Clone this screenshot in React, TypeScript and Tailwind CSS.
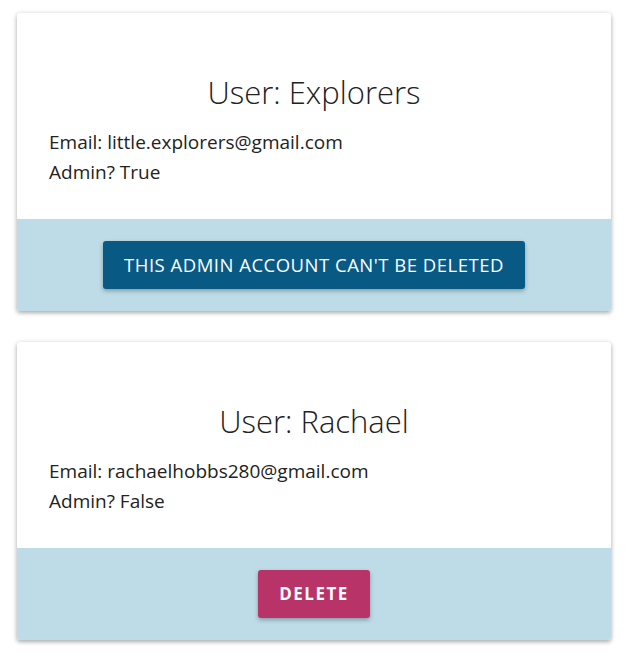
const users = [
  { name: 'Explorers', email: 'little.explorers@gmail.com', admin: true },
  { name: 'Rachael', email: 'rachaelhobbs280@gmail.com', admin: false },
]

export default function App() {
  return (
    <div className="min-h-screen bg-white pt-[13px] pl-[17px] font-['Open_Sans',sans-serif] text-[#222]">
      <div className="flex w-[594px] flex-col gap-[31px]">
        {users.map(u => (
          <div key={u.name} className="overflow-hidden rounded-[3px] bg-white shadow-[0_2px_4px_rgba(0,0,0,0.3),0_0_6px_rgba(0,0,0,0.08)]">
            <div className="h-[206px] px-8 pt-[59px]">
              <h2 className="text-center text-[31px] font-light leading-[40px]">User: {u.name}</h2>
              <p className="mt-[15px] text-[19px] leading-[30px]">Email: {u.email}</p>
              <p className="text-[19px] leading-[30px]">Admin? {u.admin ? 'True' : 'False'}</p>
            </div>
            <div className="flex h-[92px] items-center justify-center bg-[#bddce8]">
              {u.admin ? (
                <button className="h-12 rounded-[3px] bg-[#085a85] px-[21px] text-[18.5px] uppercase tracking-[0.5px] text-white shadow-[0_2px_4px_rgba(0,0,0,0.3)]">
                  This admin account can't be deleted
                </button>
              ) : (
                <button className="h-12 rounded-[3px] bg-[#b83368] px-[21px] text-[17px] font-bold uppercase tracking-[1.5px] text-white shadow-[0_2px_4px_rgba(0,0,0,0.3)]">
                  Delete
                </button>
              )}
            </div>
          </div>
        ))}
      </div>
    </div>
  )
}
